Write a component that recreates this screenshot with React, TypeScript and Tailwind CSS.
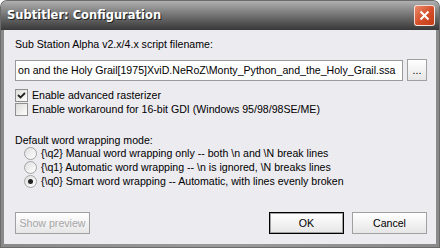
import React from 'react';

const font = { fontFamily: '"Liberation Sans", Arial, sans-serif' };

function Checkbox({ checked }: { checked?: boolean }) {
  return (
    <div className="w-[13px] h-[13px] border border-[#8f8f8f] bg-gradient-to-br from-[#dcdcd7] to-white flex items-center justify-center shrink-0">
      {checked && (
        <svg width="9" height="9" viewBox="0 0 9 9">
          <path d="M1 4 L3.5 6.5 L8 2" stroke="#222" strokeWidth="1.8" fill="none" />
        </svg>
      )}
    </div>
  );
}

function Radio({ checked }: { checked?: boolean }) {
  return (
    <div className="w-[13px] h-[13px] rounded-full border border-[#a4a4a4] bg-gradient-to-br from-[#dedede] to-white flex items-center justify-center shrink-0">
      {checked && <div className="w-[5px] h-[5px] rounded-full bg-[#222]" />}
    </div>
  );
}

function Button({ children, primary, disabled, className }: { children: React.ReactNode; primary?: boolean; disabled?: boolean; className?: string }) {
  return (
    <div
      className={`h-[22px] flex items-center justify-center ${primary ? 'border border-black' : 'border border-[#a0a0a0]'} bg-gradient-to-b from-white to-[#e6e6e6] ${disabled ? 'text-[#a7a6aa]' : 'text-black'} ${className ?? ''}`}
    >
      <div className={`w-full h-full flex items-center justify-center ${primary ? 'border border-[#a0a0a0]' : ''}`}>{children}</div>
    </div>
  );
}

export default function App() {
  return (
    <div className="w-[440px] h-[248px] bg-[#6b6b6b] rounded-t-[7px] p-[1px] overflow-hidden" style={font}>
      <div className="w-full h-full flex flex-col rounded-t-[6px] overflow-hidden bg-[#9a9a9a]">
        {/* title bar */}
        <div className="h-[29px] shrink-0 flex items-center justify-between pl-[6px] pr-[4px] bg-gradient-to-b from-[#b0b0b0] via-[#727272] to-[#383838]">
          <span className="text-white font-bold [text-shadow:1px_1px_0_#222]" style={{ fontFamily: '"DejaVu Sans", sans-serif', fontSize: 11.5 }}>
            Subtitler: Configuration
          </span>
          <div className="w-[21px] h-[21px] rounded-[3px] border border-white/80 bg-gradient-to-br from-[#e88a6a] via-[#d5502a] to-[#c23c18] flex items-center justify-center">
            <svg width="11" height="11" viewBox="0 0 11 11">
              <path d="M1.5 1.5 L9.5 9.5 M9.5 1.5 L1.5 9.5" stroke="white" strokeWidth="2" />
            </svg>
          </div>
        </div>
        {/* body */}
        <div className="flex-1 flex px-[3px] pb-[3px] bg-gradient-to-r from-[#8a8a8a] via-[#9a9a9a] to-[#8a8a8a]">
          <div className="flex-1 bg-[#ecebf0] flex flex-col pl-[11px] pr-[9px] text-[10.6px] text-black leading-[13px]">
            <div className="mt-[8px]">Sub Station Alpha v2.x/4.x script filename:</div>
            <div className="flex items-center gap-[4px] mt-[8px]">
              <div className="flex-1 h-[21px] border border-[#9a9a9a] bg-white flex items-center pl-[2px] overflow-hidden whitespace-nowrap">
                on and the Holy Grail[1975]XviD.NeRoZ\Monty_Python_and_the_Holy_Grail.ssa
              </div>
              <Button className="w-[20px] h-[21px]">...</Button>
            </div>
            <div className="flex items-center gap-[4px] mt-[8px]">
              <Checkbox checked />
              <span>Enable advanced rasterizer</span>
            </div>
            <div className="flex items-center gap-[4px] mt-[1px]">
              <Checkbox />
              <span>Enable workaround for 16-bit GDI (Windows 95/98/98SE/ME)</span>
            </div>
            <div className="mt-[18px]">Default word wrapping mode:</div>
            <div className="flex flex-col gap-[1px] mt-[0px] pl-[9px]">
              <div className="flex items-center gap-[4px]">
                <Radio />
                <span>{'{\\q2} Manual word wrapping only -- both \\n and \\N break lines'}</span>
              </div>
              <div className="flex items-center gap-[4px]">
                <Radio />
                <span>{'{\\q1} Automatic word wrapping -- \\n is ignored, \\N breaks lines'}</span>
              </div>
              <div className="flex items-center gap-[4px]">
                <Radio checked />
                <span>{'{\\q0} Smart word wrapping -- Automatic, with lines evenly broken'}</span>
              </div>
            </div>
            <div className="flex items-center mt-[24px]">
              <Button disabled className="w-[75px]">Show preview</Button>
              <div className="flex-1" />
              <Button primary className="w-[75px]">OK</Button>
              <Button className="w-[75px] ml-[8px]">Cancel</Button>
            </div>
          </div>
        </div>
      </div>
    </div>
  );
}
